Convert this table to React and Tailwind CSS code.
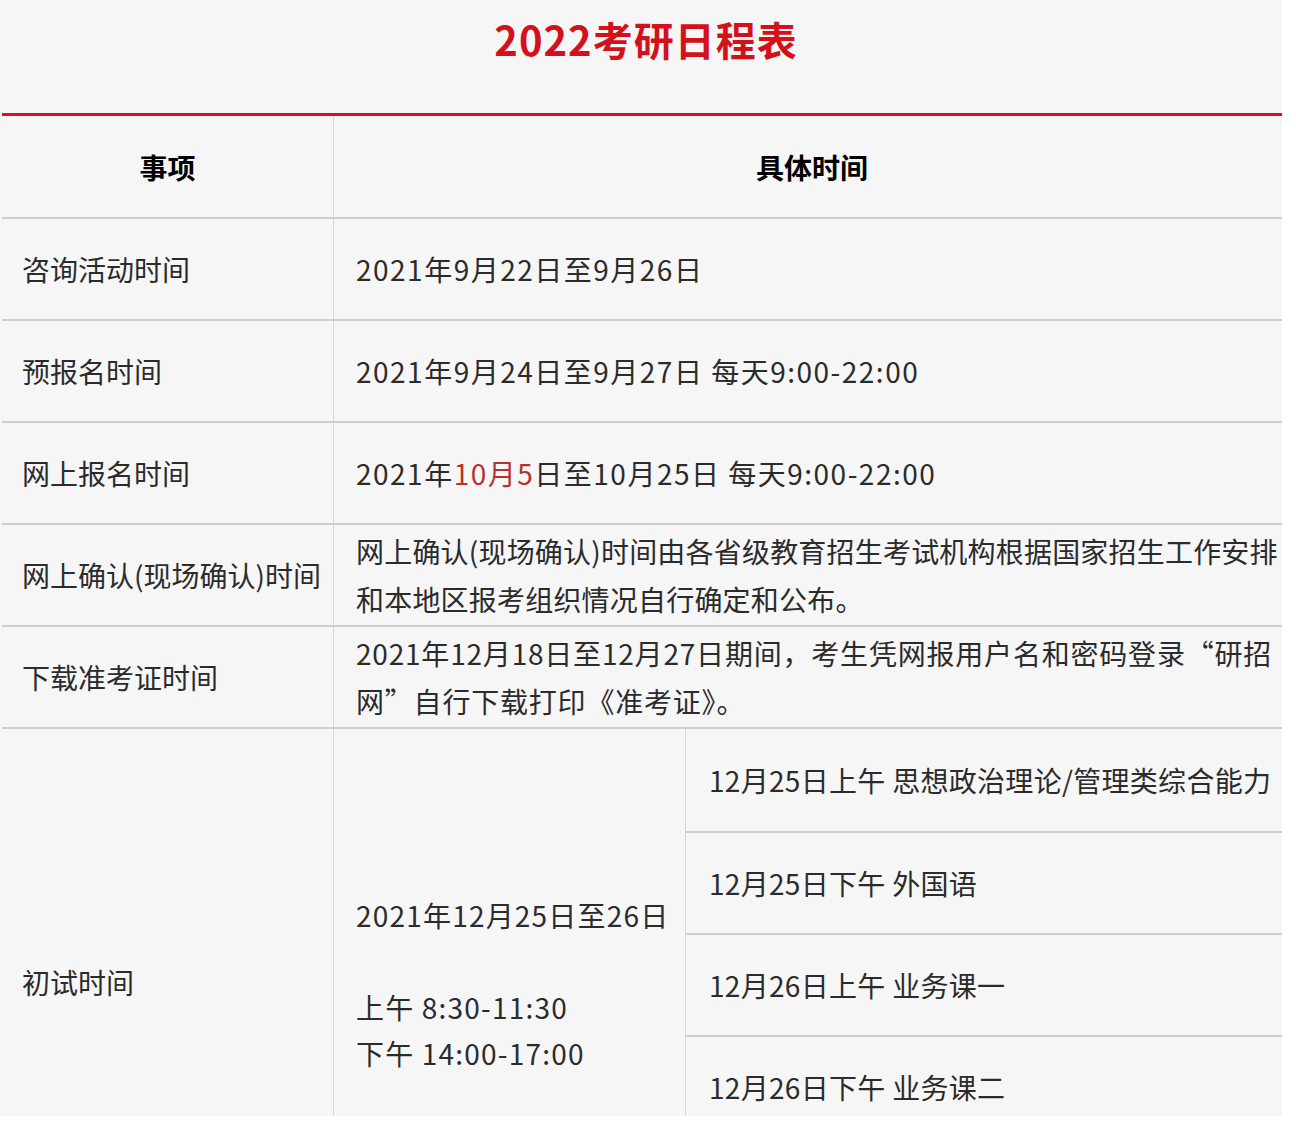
const rows = [
  { label: "咨询活动时间", content: ["2021年9月22日至9月26日"] },
  { label: "预报名时间", content: ["2021年9月24日至9月27日 每天9:00-22:00"] },
  {
    label: "网上报名时间",
    content: [
      <>
        2021年<span className="text-[#b8312c]">10月5</span>日至10月25日 每天9:00-22:00
      </>,
    ],
  },
  {
    label: "网上确认(现场确认)时间",
    track: "tracking-[0.2px]",
    content: [
      "网上确认(现场确认)时间由各省级教育招生考试机构根据国家招生工作安排",
      "和本地区报考组织情况自行确定和公布。",
    ],
  },
  {
    label: "下载准考证时间",
    track: "tracking-[0.8px]",
    content: [
      "2021年12月18日至12月27日期间，考生凭网报用户名和密码登录“研招",
      "网”自行下载打印《准考证》。",
    ],
  },
];

const exams = [
  "12月25日上午 思想政治理论/管理类综合能力",
  "12月25日下午 外国语",
  "12月26日上午 业务课一",
  "12月26日下午 业务课二",
];

const App = () => {
  return (
    <div
      className="w-[1296px] h-[1136px] bg-white text-[#2b2b2b]"
      style={{ fontFamily: '"Noto Sans CJK SC", "Noto Sans", sans-serif' }}
    >
      <div className="w-[1282px] h-[1116px] overflow-hidden bg-[#f6f6f7]">
        <div className="h-[78px] flex items-center justify-center pl-[10px]">
          <h1 className="text-[40px] font-bold text-[#d3111b] tracking-[1px]">2022考研日程表</h1>
        </div>
        <div className="h-[35px]"></div>
        <div className="h-[3px] ml-[2px] bg-[#d6141c]"></div>

        {/* header */}
        <div className="flex h-[101px] ml-[2px]">
          <div className="w-[332px] shrink-0 border-r border-[#d4d4d4] flex items-center justify-center text-[28px] font-bold text-black">
            事项
          </div>
          <div className="flex-1 flex items-center justify-center pl-[8px] text-[28px] font-bold text-black">
            具体时间
          </div>
        </div>

        {rows.map((row, i) => (
          <div key={i} className="flex h-[102px] ml-[2px] border-t-2 border-[#d2cccc]">
            <div className="w-[332px] shrink-0 border-r border-[#d4d4d4] flex items-center pl-[20px] text-[28px] whitespace-nowrap">
              {row.label}
            </div>
            <div
              className={
                "flex-1 min-w-0 flex flex-col justify-center pl-[22px] text-[28px] leading-[48px] whitespace-nowrap " +
                (row.track || "tracking-[1.5px]")
              }
            >
              {row.content.map((line, j) => (
                <div key={j}>{line}</div>
              ))}
            </div>
          </div>
        ))}

        {/* exam row */}
        <div className="flex ml-[2px] border-t-2 border-[#d2cccc]">
          <div className="w-[332px] shrink-0 border-r border-[#d4d4d4] pl-[20px] pt-[230px] text-[28px] leading-[46px]">
            初试时间
          </div>
          <div className="w-[352px] shrink-0 border-r border-[#d4d4d4] pl-[22px] pt-[163px] text-[28px] leading-[46px] tracking-[1.2px] whitespace-nowrap">
            <div>2021年12月25日至26日</div>
            <div className="h-[46px]"></div>
            <div>上午 8:30-11:30</div>
            <div>下午 14:00-17:00</div>
          </div>
          <div className="flex-1 flex flex-col">
            {exams.map((e, i) => (
              <div
                key={i}
                className={
                  "h-[102px] flex items-center pl-[23px] text-[28px] whitespace-nowrap tracking-[0.3px] " +
                  (i > 0 ? "border-t-2 border-[#d2cccc]" : "")
                }
              >
                {e}
              </div>
            ))}
          </div>
        </div>
      </div>
    </div>
  );
};

export default App;
